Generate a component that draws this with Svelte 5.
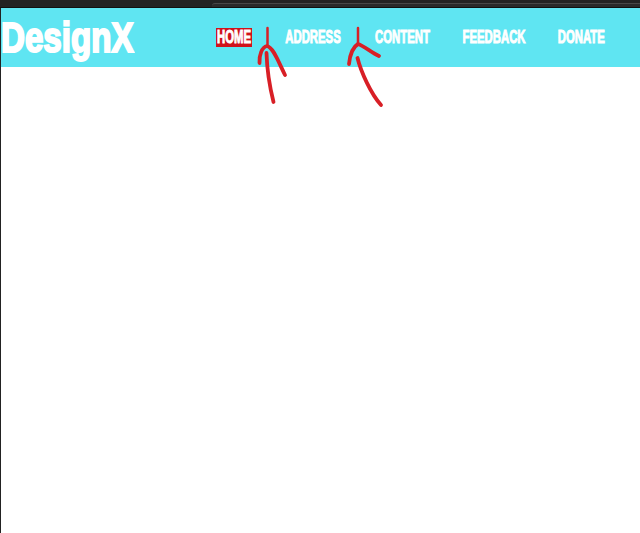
<script>
    const links = [
        { label: 'HOME', width: 36, active: true },
        { label: 'ADDRESS', width: 58 },
        { label: 'CONTENT', width: 56 },
        { label: 'FEEDBACK', width: 63 },
        { label: 'DONATE', width: 48 }
    ];
</script>

<div class="page">
    <div class="chrome">
        <div class="tab"></div>
    </div>
    <main class="content">
        <header class="topbar">
            <div class="logo"><span>DesignX</span></div>
            <nav class="links">
                {#each links as link}
                    <a href="#top" class="link" class:active={link.active} style="width: {link.width}px">
                        <span>{link.label}</span>
                    </a>
                {/each}
            </nav>
        </header>
    </main>

    <!-- hand drawn marks on top of the screenshot -->
    <svg class="marks" width="640" height="533" viewBox="0 0 640 533">
        <g fill="none" stroke="#d81f26" stroke-linecap="round" stroke-linejoin="round">
            <path stroke-width="2.500" d="M267.500 28 L267.500 45" />
            <path stroke-width="3.800" d="M259.500 63 C259 55 262 47 267 46 C273 47 278 61 285 75" />
            <path stroke-width="3.800" d="M266.500 53 C267 70 270 88 273.500 102" />
            <path stroke-width="2.500" d="M358 28 L358 44" />
            <path stroke-width="3.800" d="M349 64 C350 54 353 47 358 44 C364 46 371 52 379 56" />
            <path stroke-width="3.800" d="M357.500 58 C361 72 371 94 381 105" />
        </g>
    </svg>
</div>

<style>
    :global(body) {
        margin: 0;
        background: #fff;
    }

    .page {
        position: relative;
        width: 640px;
        height: 533px;
        overflow: hidden;
        background: #fff;
        display: flex;
        flex-direction: column;
    }

    .chrome {
        display: flow-root;
        height: 7px;
        background: #232323;
        border-bottom: 1px solid #111;
        flex-shrink: 0;
        padding-left: 212px;
    }

    .tab {
        height: 3px;
        margin-top: 3px;
        background: #2a2a2a;
        border-top: 1px solid #484848;
        border-top-left-radius: 3px;
    }

    .content {
        flex: 1;
        border-left: 1px solid #222;
    }

    .topbar {
        height: 59px;
        background: #5fe5f2;
        display: flex;
        align-items: center;
    }

    .logo {
        width: 215px;
        flex-shrink: 0;
        color: #fff;
        font-family: "Liberation Sans", Arial, sans-serif;
        font-size: 43px;
        font-weight: 700;
        line-height: 1;
        white-space: nowrap;
    }

    .logo span {
        display: inline-block;
        transform: scaleX(0.77);
        transform-origin: left center;
        -webkit-text-stroke: 2.2px #fff;
    }

    .links {
        display: flex;
        gap: 32px;
    }

    .link {
        display: flex;
        justify-content: center;
        height: 19px;
        line-height: 19px;
        color: #fff;
        text-decoration: none;
        font-family: "Liberation Sans", Arial, sans-serif;
        font-size: 18px;
        font-weight: 700;
        white-space: nowrap;
    }

    .link span {
        flex-shrink: 0;
        transform: scaleX(0.63);
        -webkit-text-stroke: 1px #fff;
    }

    .link.active {
        background: #d0121c;
    }

    .marks {
        position: absolute;
        top: 0;
        left: 0;
    }
</style>
